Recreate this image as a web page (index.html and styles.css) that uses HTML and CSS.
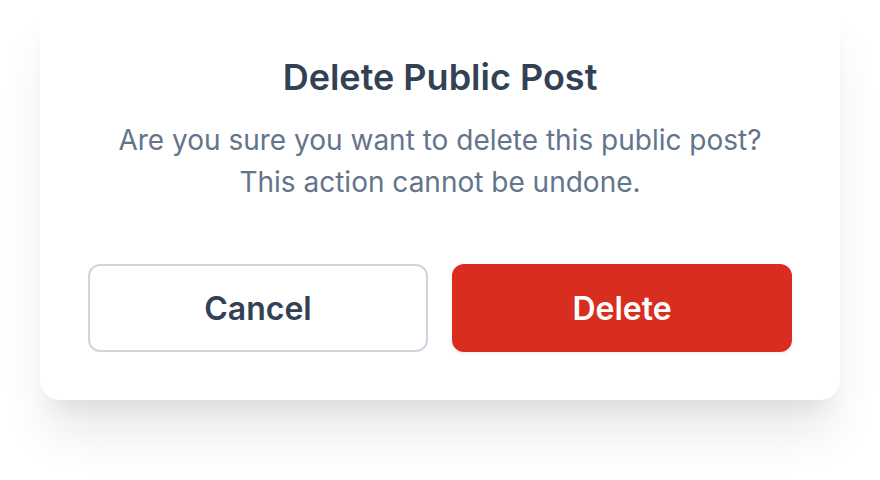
FILE: index.html
```html
<!DOCTYPE html>
<html lang="en">
<head>
<meta charset="utf-8">
<title>Delete Public Post</title>
<link rel="stylesheet" href="styles.css">
</head>
<body>
<div class="page">
  <div class="card" role="dialog" aria-labelledby="t">
    <h2 class="title" id="t">Delete Public Post</h2>
    <p class="text">Are you sure you want to delete this public post?<br>This action cannot be undone.</p>
    <div class="actions">
      <button class="btn btn-cancel" type="button">Cancel</button>
      <button class="btn btn-delete" type="button">Delete</button>
    </div>
  </div>
</div>
</body>
</html>
```
FILE: styles.css
```css
html, body {
  margin: 0;
  padding: 0;
  background: #ffffff;
}
body {
  font-family: Inter, "Noto Sans", sans-serif;
  width: 880px;
  height: 480px;
  overflow: hidden;
}
.page {
  padding: 0 40px;
}
.card {
  background: #ffffff;
  border-radius: 0 0 20px 20px;
  box-shadow: 0 40px 50px -10px rgba(15, 23, 42, 0.10), 0 20px 20px -10px rgba(15, 23, 42, 0.05);
  padding: 53px 48px 48px;
  text-align: center;
}
.title {
  margin: 0;
  font-size: 36px;
  line-height: 48px;
  font-weight: 600;
  color: #334155;
}
.text {
  margin: 18px 0 0;
  font-size: 28px;
  line-height: 42px;
  color: #64748b;
}
.actions {
  display: flex;
  gap: 24px;
  margin-top: 61px;
}
.btn {
  flex: 1;
  height: 88px;
  border-radius: 12px;
  font-family: inherit;
  font-size: 32px;
  font-weight: 600;
}
.btn-cancel {
  background: #ffffff;
  border: 2px solid #d1d5e0;
  color: #334155;
}
.btn-delete {
  background: #d92d20;
  border: 2px solid #d92d20;
  color: #ffffff;
  box-shadow: 0 2px 4px rgba(0, 0, 0, 0.06);
}
```
